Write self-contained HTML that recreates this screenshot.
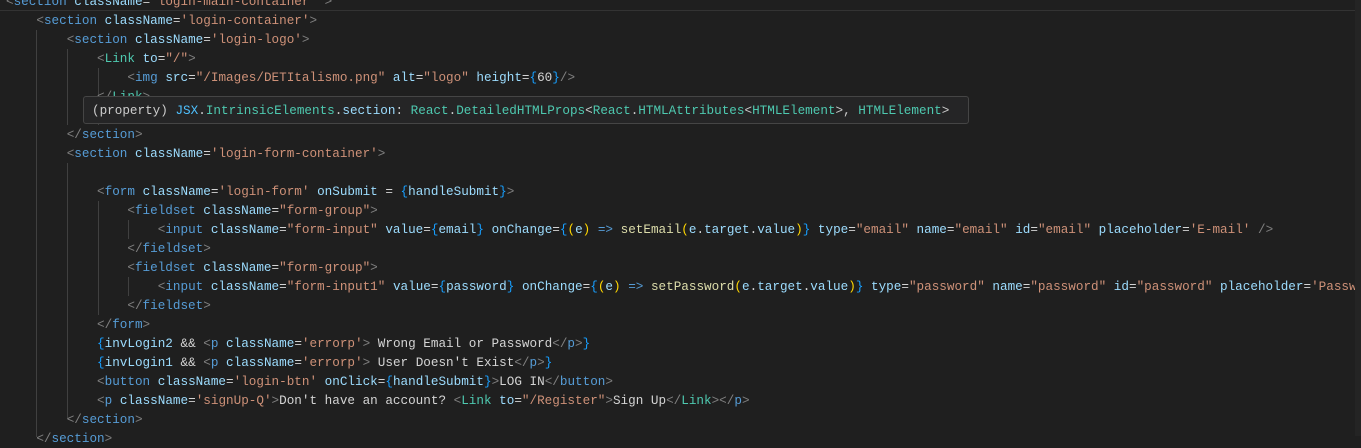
<!DOCTYPE html>
<html><head><style>
html,body{margin:0;padding:0;background:#1f1f1f;width:1361px;height:436px;overflow:hidden}
#ed{position:absolute;left:6px;top:-8px;font-family:"Liberation Mono",monospace;font-size:12.65px;line-height:19px;color:#d4d4d4}
.l{height:19px;white-space:pre}
.p{color:#808080}.t{color:#569cd6}.c{color:#4ec9b0}.a{color:#9cdcfe}.s{color:#ce9178}.w{color:#d4d4d4}.y{color:#ffd700}.b{color:#179fff}.f{color:#dcdcaa}
.g{position:absolute;width:1px;background:#404040}
#tip{position:absolute;left:83px;top:96px;width:886px;height:28px;background:#252526;border:1px solid #454545;border-radius:3px;font-family:"Liberation Mono",monospace;font-size:12.65px;line-height:27px;color:#cccccc;white-space:pre;box-sizing:border-box;padding-left:8px}
#top{position:absolute;left:0;top:10px;width:1361px;height:1px;background:#333}
#sb{position:absolute;right:0;top:0;width:6px;height:436px;background:#242424}
</style></head><body>
<div id="top"></div>
<div class="g" style="left:36px;top:30px;height:407px"></div>
<div class="g" style="left:67px;top:49px;height:76px"></div>
<div class="g" style="left:98px;top:68px;height:57px"></div>
<div class="g" style="left:67px;top:163px;height:256px"></div>
<div class="g" style="left:98px;top:201px;height:114px"></div>
<div class="g" style="left:128px;top:220px;height:19px"></div>
<div class="g" style="left:128px;top:277px;height:19px"></div>
<div id="ed"><div class="l"><span class="p">&lt;</span><span class="t">section</span> <span class="a">className</span><span class="w">=</span><span class="s">'login-main-container'</span> <span class="p">&gt;</span></div><div class="l">    <span class="p">&lt;</span><span class="t">section</span> <span class="a">className</span>=<span class="s">'login-container'</span><span class="p">&gt;</span></div><div class="l">        <span class="p">&lt;</span><span class="t">section</span> <span class="a">className</span>=<span class="s">'login-logo'</span><span class="p">&gt;</span></div><div class="l">            <span class="p">&lt;</span><span class="c">Link</span> <span class="a">to</span>=<span class="s">"/"</span><span class="p">&gt;</span></div><div class="l">                <span class="p">&lt;</span><span class="t">img</span> <span class="a">src</span>=<span class="s">"/Images/DETItalismo.png"</span> <span class="a">alt</span>=<span class="s">"logo"</span> <span class="a">height</span>=<span class="b">{</span>60<span class="b">}</span><span class="p">/&gt;</span></div><div class="l">            <span class="p">&lt;/</span><span class="c">Link</span><span class="p">&gt;</span></div><div class="l"> </div><div class="l">        <span class="p">&lt;/</span><span class="t">section</span><span class="p">&gt;</span></div><div class="l">        <span class="p">&lt;</span><span class="t">section</span> <span class="a">className</span>=<span class="s">'login-form-container'</span><span class="p">&gt;</span></div><div class="l"> </div><div class="l">            <span class="p">&lt;</span><span class="t">form</span> <span class="a">className</span>=<span class="s">'login-form'</span> <span class="a">onSubmit</span> = <span class="b">{</span><span class="a">handleSubmit</span><span class="b">}</span><span class="p">&gt;</span></div><div class="l">                <span class="p">&lt;</span><span class="t">fieldset</span> <span class="a">className</span>=<span class="s">"form-group"</span><span class="p">&gt;</span></div><div class="l">                    <span class="p">&lt;</span><span class="t">input</span> <span class="a">className</span>=<span class="s">"form-input"</span> <span class="a">value</span>=<span class="b">{</span><span class="a">email</span><span class="b">}</span> <span class="a">onChange</span>=<span class="b">{</span><span class="y">(</span><span class="a">e</span><span class="y">)</span> <span class="t">=&gt;</span> <span class="f">setEmail</span><span class="y">(</span><span class="a">e</span>.<span class="a">target</span>.<span class="a">value</span><span class="y">)</span><span class="b">}</span> <span class="a">type</span>=<span class="s">"email"</span> <span class="a">name</span>=<span class="s">"email"</span> <span class="a">id</span>=<span class="s">"email"</span> <span class="a">placeholder</span>=<span class="s">'E-mail'</span> <span class="p">/&gt;</span></div><div class="l">                <span class="p">&lt;/</span><span class="t">fieldset</span><span class="p">&gt;</span></div><div class="l">                <span class="p">&lt;</span><span class="t">fieldset</span> <span class="a">className</span>=<span class="s">"form-group"</span><span class="p">&gt;</span></div><div class="l">                    <span class="p">&lt;</span><span class="t">input</span> <span class="a">className</span>=<span class="s">"form-input1"</span> <span class="a">value</span>=<span class="b">{</span><span class="a">password</span><span class="b">}</span> <span class="a">onChange</span>=<span class="b">{</span><span class="y">(</span><span class="a">e</span><span class="y">)</span> <span class="t">=&gt;</span> <span class="f">setPassword</span><span class="y">(</span><span class="a">e</span>.<span class="a">target</span>.<span class="a">value</span><span class="y">)</span><span class="b">}</span> <span class="a">type</span>=<span class="s">"password"</span> <span class="a">name</span>=<span class="s">"password"</span> <span class="a">id</span>=<span class="s">"password"</span> <span class="a">placeholder</span>=<span class="s">'Password'</span> <span class="p">/&gt;</span></div><div class="l">                <span class="p">&lt;/</span><span class="t">fieldset</span><span class="p">&gt;</span></div><div class="l">            <span class="p">&lt;/</span><span class="t">form</span><span class="p">&gt;</span></div><div class="l">            <span class="b">{</span><span class="a">invLogin2</span> &amp;&amp; <span class="p">&lt;</span><span class="t">p</span> <span class="a">className</span>=<span class="s">'errorp'</span><span class="p">&gt;</span> Wrong Email or Password<span class="p">&lt;/</span><span class="t">p</span><span class="p">&gt;</span><span class="b">}</span></div><div class="l">            <span class="b">{</span><span class="a">invLogin1</span> &amp;&amp; <span class="p">&lt;</span><span class="t">p</span> <span class="a">className</span>=<span class="s">'errorp'</span><span class="p">&gt;</span> User Doesn't Exist<span class="p">&lt;/</span><span class="t">p</span><span class="p">&gt;</span><span class="b">}</span></div><div class="l">            <span class="p">&lt;</span><span class="t">button</span> <span class="a">className</span>=<span class="s">'login-btn'</span> <span class="a">onClick</span>=<span class="b">{</span><span class="a">handleSubmit</span><span class="b">}</span><span class="p">&gt;</span>LOG IN<span class="p">&lt;/</span><span class="t">button</span><span class="p">&gt;</span></div><div class="l">            <span class="p">&lt;</span><span class="t">p</span> <span class="a">className</span>=<span class="s">'signUp-Q'</span><span class="p">&gt;</span>Don't have an account? <span class="p">&lt;</span><span class="c">Link</span> <span class="a">to</span>=<span class="s">"/Register"</span><span class="p">&gt;</span>Sign Up<span class="p">&lt;/</span><span class="c">Link</span><span class="p">&gt;&lt;/</span><span class="t">p</span><span class="p">&gt;</span></div><div class="l">        <span class="p">&lt;/</span><span class="t">section</span><span class="p">&gt;</span></div><div class="l">    <span class="p">&lt;/</span><span class="t">section</span><span class="p">&gt;</span></div></div>
<div id="tip">(property) <span style="color:#4fc1ff">JSX</span>.<span style="color:#4ec9b0">IntrinsicElements</span>.<span style="color:#9cdcfe">section</span>: <span style="color:#4ec9b0">React</span>.<span style="color:#4ec9b0">DetailedHTMLProps</span>&lt;<span style="color:#4ec9b0">React</span>.<span style="color:#4ec9b0">HTMLAttributes</span>&lt;<span style="color:#4ec9b0">HTMLElement</span>&gt;, <span style="color:#4ec9b0">HTMLElement</span>&gt;</div>
<div id="sb"></div>
</body></html>
